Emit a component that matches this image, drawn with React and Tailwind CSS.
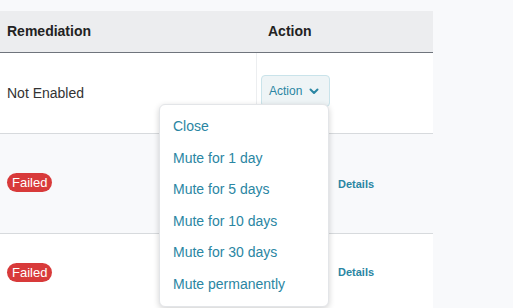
import React from 'react'

const items = ['Close', 'Mute for 1 day', 'Mute for 5 days', 'Mute for 10 days', 'Mute for 30 days', 'Mute permanently']

function Badge() {
  return (
    <span className="inline-flex items-center h-[19px] px-[5px] rounded-full bg-[#d83a3a] text-white text-[13px] leading-none">
      Failed
    </span>
  )
}

export default function App() {
  return (
    <div className="relative w-[513px] h-[308px] overflow-hidden bg-[#f8f9fb] pt-[11px] font-['Liberation_Sans',Arial,sans-serif]">
      <div className="w-[433px]">
        <div className="flex h-[42px] items-center bg-[#ecedef] border-b border-[#6f747c] text-[14px] font-bold text-[#222]">
          <div className="w-[258px] pl-[7px]">Remediation</div>
          <div className="pl-[10px]">Action</div>
        </div>
        <div className="flex h-[81px] bg-white border-b border-[#d7dadd]">
          <div className="w-[257px] pl-[7px] flex items-center text-[14px] text-[#333] border-r border-[#eceef0]">Not Enabled</div>
          <div className="pl-[4px] pt-[22px]">
            <button className="flex items-center gap-[7px] h-[32px] w-[69px] pl-[7px] rounded-[4px] border border-[#c9e3ea] bg-[#eef4f6] text-[12px] text-[#2a86a3]">
              Action
              <svg width="10" height="7" viewBox="0 0 10 7" fill="none" stroke="#2a86a3" strokeWidth="2" strokeLinecap="round" strokeLinejoin="round">
                <path d="M1.5 1.5 L5 5 L8.5 1.5" />
              </svg>
            </button>
          </div>
        </div>
        <div className="flex h-[100px] items-center bg-[#f8f9fb] border-b border-[#d7dadd]">
          <div className="w-[338px] pl-[7px] pb-[3px]"><Badge /></div>
          <div className="text-[11px] font-bold text-[#2a86a3] pt-[2px]">Details</div>
        </div>
        <div className="flex h-[76px] items-center bg-white">
          <div className="w-[338px] pl-[7px]"><Badge /></div>
          <div className="text-[11px] font-bold text-[#2a86a3]">Details</div>
        </div>
      </div>

      <div className="absolute left-[159px] top-[104px] w-[170px] h-[203px] bg-white rounded-[6px] border border-[#e3e5e8] shadow-[0_2px_6px_rgba(0,0,0,0.18)] pt-[6px]">
        {items.map((t) => (
          <div key={t} className="h-[31.5px] flex items-center pl-[13px] text-[14px] text-[#2a86a3]">
            {t}
          </div>
        ))}
      </div>
    </div>
  )
}
